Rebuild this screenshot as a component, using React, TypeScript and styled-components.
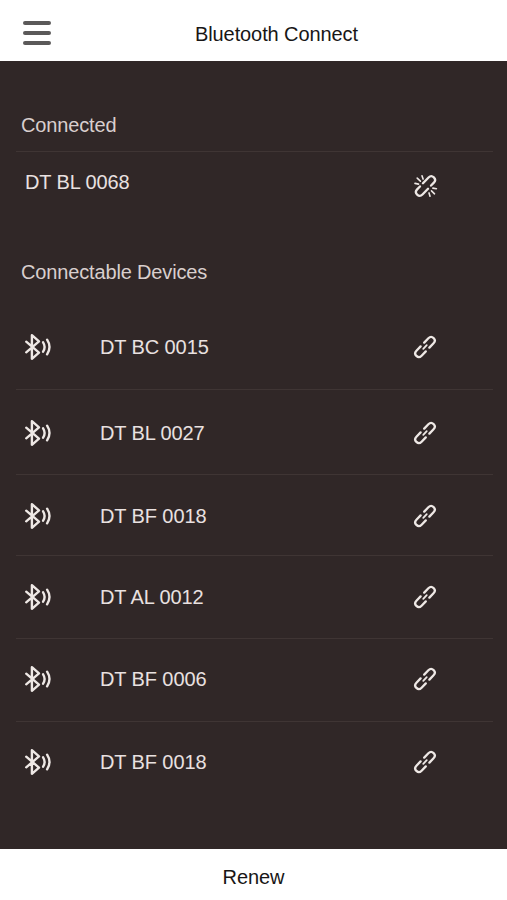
import React from "react";
import styled, { createGlobalStyle } from "styled-components";

const GlobalStyle = createGlobalStyle`
  * { box-sizing: border-box; }
  body { margin: 0; background: #302727; }
  button { font: inherit; color: inherit; background: none; border: 0; padding: 0; }
`;

const Screen = styled.div`
  display: flex;
  flex-direction: column;
  width: 100%;
  height: 900px;
  overflow: hidden;
  background: #302727;
  color: #e9e1e0;
  font: 20px/24px "Liberation Sans", Arial, sans-serif;
`;

const Header = styled.header`
  display: grid;
  grid-template-columns: 195px 1fr;
  height: 61px;
  flex: none;
  background: #fff;
  color: #181616;
`;

const MenuButton = styled.button`
  display: flex;
  flex-direction: column;
  gap: 6px;
  padding: 21px 0 0 23px !important;
`;

const MenuBar = styled.span`
  width: 28px;
  height: 4px;
  border-radius: 2px;
  background: #5b5959;
`;

const Title = styled.h1`
  margin: 22px 0 0;
  font: inherit;
  letter-spacing: -0.1px;
`;

const Content = styled.main`
  flex: 1;
  padding: 0 14px 0 16px;
`;

const SectionTitle = styled.h2<{ $top: number }>`
  margin: 0;
  padding: ${(p) => p.$top}px 0 0 5px;
  font: inherit;
  letter-spacing: -0.15px;
  color: #d9cfce;
`;

const ConnectedRow = styled.div`
  display: grid;
  grid-template-columns: 388px 1fr;
  height: 109px;
  margin-top: 14px;
  padding: 18px 0 0 9px;
  border-top: 1px solid #3f3534;
  letter-spacing: -0.1px;
`;

const DeviceList = styled.ul`
  list-style: none;
  margin: 0;
  padding: 0;
`;

const DeviceRow = styled.li<{ $height: number; $top: number }>`
  display: grid;
  grid-template-columns: 84px 312px 1fr;
  align-items: start;
  height: ${(p) => p.$height}px;
  padding-top: ${(p) => p.$top}px;
  border-bottom: 1px solid #3f3534;
  letter-spacing: -0.1px;
  &:last-child { border-bottom: 0; }
`;

const BluetoothGlyph = styled.svg`
  display: block;
  width: 30px;
  height: 28px;
  margin: -2px 0 0 7px;
`;

const LinkGlyph = styled.svg<{ $shift?: number }>`
  display: block;
  width: 26px;
  height: 26px;
  margin-top: ${(p) => p.$shift ?? -1}px;
`;

const IconButton = styled.button`
  justify-self: start;
`;

const Footer = styled.button`
  flex: none;
  height: 51px;
  padding-top: 4px !important;
  background: #fff !important;
  color: #181616 !important;
  letter-spacing: -0.1px;
`;

const BluetoothIcon = () => (
  <BluetoothGlyph viewBox="0 0 30 28" fill="none" stroke="#eee8e5" strokeWidth="2.4" strokeLinejoin="round" strokeLinecap="round">
    <path d="M3.2 8.7 16 19.6 8.9 25.8V2.2L16 8.4 3.2 19.3" />
    <path d="M20.1 9.3q3 4.7 0 9.4M24.1 6.7q4.8 7.3 0 14.6" />
  </BluetoothGlyph>
);

const LinkIcon = () => (
  <LinkGlyph viewBox="0 0 26 26" fill="none" stroke="#eee8e5" strokeWidth="2.3" strokeLinecap="round">
    <g transform="translate(13 13) rotate(-46)">
      <path d="M2.6-3.6H8.6Q12.4-3.6 12.4 0T8.6 3.6H2.6M-2.6-3.6H-8.6Q-12.4-3.6-12.4 0T-8.6 3.6H-2.6" />
      <path strokeWidth="1.8" d="M-2.5 0H2.5" />
    </g>
  </LinkGlyph>
);

const UnlinkIcon = () => (
  <LinkGlyph $shift={3} viewBox="0 0 26 26" fill="none" stroke="#eee8e5" strokeLinecap="round">
    <g transform="translate(12.5 13) rotate(-46)" strokeWidth="2.3">
      <path d="M.2-3.7H8.2Q12-3.7 12 0T8.2 3.7H4.2M-.2 3.7H-8.2Q-12 3.7-12 0T-8.2-3.7H-4.2" />
    </g>
    <path strokeWidth="1.6" d="M9 2.7 10.1 6.1M4.2 5.1 7.4 8.1M2 10.4 5.5 11.1M16 19.9 17 23.2M18.5 17.9 21.5 20.8M19.9 15.1 23.4 15.7" />
  </LinkGlyph>
);

const devices = [
  { name: "DT BC 0015", height: 106, top: 51 },
  { name: "DT BL 0027", height: 85, top: 31 },
  { name: "DT BF 0018", height: 81, top: 29 },
  { name: "DT AL 0012", height: 83, top: 29 },
  { name: "DT BF 0006", height: 83, top: 28 },
  { name: "DT BF 0018", height: 83, top: 28 },
];

export default function App() {
  return (
    <>
      <GlobalStyle />
      <Screen>
        <Header>
          <MenuButton aria-label="Menu">
            <MenuBar />
            <MenuBar />
            <MenuBar />
          </MenuButton>
          <Title>Bluetooth Connect</Title>
        </Header>
        <Content>
          <SectionTitle $top={52}>Connected</SectionTitle>
          <ConnectedRow>
            <span>DT BL 0068</span>
            <UnlinkIcon />
          </ConnectedRow>
          <SectionTitle $top={0}>Connectable Devices</SectionTitle>
          <DeviceList>
            {devices.map((device, index) => (
              <DeviceRow key={index} $height={device.height} $top={device.top}>
                <BluetoothIcon />
                <span>{device.name}</span>
                <IconButton aria-label="Connect">
                  <LinkIcon />
                </IconButton>
              </DeviceRow>
            ))}
          </DeviceList>
        </Content>
        <Footer>Renew</Footer>
      </Screen>
    </>
  );
}
